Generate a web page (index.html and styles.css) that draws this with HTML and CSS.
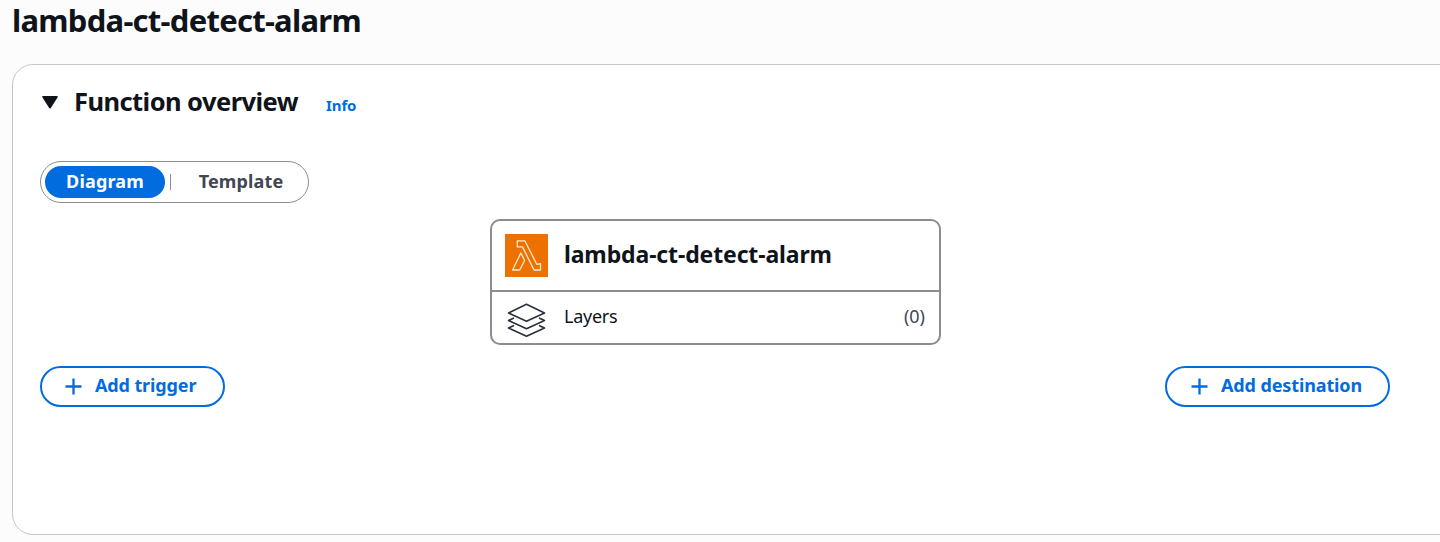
FILE: index.html
```html
<!DOCTYPE html>
<html lang="en">
<head>
<meta charset="utf-8">
<title>lambda-ct-detect-alarm</title>
<link rel="stylesheet" href="styles.css">
</head>
<body>
<h1 class="page-title"><span>lambda-ct-detect-alarm</span></h1>
<section class="panel">
  <header class="panel-header">
    <svg class="caret" width="18" height="14" viewBox="0 0 18 14"><path d="M2 1.7H16L9 12.7Z" fill="#0f141a" stroke="#0f141a" stroke-width="1.6" stroke-linejoin="round"/></svg>
    <h2 class="panel-title">Function overview</h2>
    <a class="info">Info</a>
  </header>
  <div class="segments">
    <button class="segment segment-active"><span class="diagram-label">Diagram</span></button>
    <i class="divider"></i>
    <button class="segment segment-template"><span class="template-label">Template</span></button>
  </div>
  <div class="function-card">
    <div class="card-row card-name">
      <svg class="lambda" width="43" height="43" viewBox="0 0 43 43"><rect width="43" height="43" fill="#ed7100"/><path d="M12.3 6.8H19.8L31.8 30.3L35.5 29.7V36H29L17.5 12.9H12.3ZM15.9 18.9L19.6 26.5L14.7 36H7.6Z" fill="none" stroke="#ffe9cf" stroke-width="1.3" stroke-linejoin="round"/></svg>
      <span class="name">lambda-ct-detect-alarm</span>
    </div>
    <div class="card-row card-layers">
      <svg class="layers" width="43" height="38" viewBox="0 0 43 38"><g fill="none" stroke="#2b2f3c" stroke-width="1.6" stroke-linejoin="round" stroke-linecap="round"><path d="M21.5 3.3L39.5 12L21.5 20.2L3.5 12Z"/><path d="M8.4 17.2L3.5 19.5L21.5 27.8L39.5 19.5L34.6 17.2"/><path d="M8.4 24.7L3.5 27L21.5 35.2L39.5 27L34.6 24.7"/></g></svg>
      <span class="layers-label">Layers</span>
      <span class="count">(0)</span>
    </div>
  </div>
  <div class="actions">
    <button class="action"><svg width="17" height="17" viewBox="0 0 17 17"><path d="M8.5 .5V16.5M.5 8.5H16.5" stroke="#006ce0" stroke-width="2.3"/></svg><span class="trigger-label">Add trigger</span></button>
    <button class="action destination"><svg width="17" height="17" viewBox="0 0 17 17"><path d="M8.5 .5V16.5M.5 8.5H16.5" stroke="#006ce0" stroke-width="2.3"/></svg><span class="destination-label">Add destination</span></button>
  </div>
</section>
</body>
</html>
```

FILE: styles.css
```css
* { box-sizing: border-box; }
html { overflow: hidden; }
body {
  margin: 0;
  height: 542px;
  overflow: hidden;
  background: #fcfcfd;
  color: #0f141a;
  font-family: "Noto Sans", "Open Sans", sans-serif;
  white-space: nowrap;
}
h1, h2 { margin: 0; }
button { font: inherit; margin: 0; padding: 0; }
.page-title {
  height: 64px;
  padding-left: 12px;
  font-size: 31px;
  line-height: 40px;
  font-weight: 700;
  letter-spacing: -0.73px;
}
.panel {
  width: 1460px;
  height: 471px;
  margin-left: 12px;
  padding: 17px 0 0 27px;
  border: 1px solid #c6c6cd;
  border-radius: 21px;
  background: #fff;
}
.panel-header { display: flex; height: 40px; }
.caret { margin: 13px 0 0 1px; }
.panel-title {
  width: 225px;
  margin-left: 15px;
  font-size: 25.5px;
  line-height: 39px;
  font-weight: 700;
  letter-spacing: -0.56px;
}
.info {
  margin: 7px 0 0 27px;
  color: #006ce0;
  font-size: 15px;
  line-height: 32px;
  font-weight: 700;
  letter-spacing: -0.1px;
}
.segments {
  display: flex;
  align-items: center;
  width: 269px;
  height: 42px;
  margin-top: 39px;
  padding-left: 4px;
  border: 1px solid #8c8c94;
  border-radius: 21px;
}
.segment {
  height: 32px;
  width: 137px;
  padding-bottom: 2px;
  border: 0;
  border-radius: 16px;
  background: none;
  color: #424650;
  font-size: 18px;
  line-height: 30px;
  font-weight: 700;
  letter-spacing: 0.15px;
}
.segment-active { width: 120px; background: #006ce0; color: #fff; }
.segment-template { padding-left: 3px; }
.divider { width: 1px; height: 16px; margin-left: 5px; background: #8c8c94; }
.function-card {
  width: 451px;
  height: 126px;
  margin: 16px 0 0 450px;
  border: 2px solid #8c8c8f;
  border-radius: 10px;
}
.card-row { display: flex; }
.card-name { height: 71px; padding: 13px; border-bottom: 2px solid #8c8c8f; }
.name {
  margin-left: 16px;
  font-size: 23px;
  line-height: 40px;
  font-weight: 700;
  letter-spacing: -0.13px;
}
.card-layers { padding: 9px 14px 0 13px; font-size: 18px; line-height: 31px; }
.layers-label { margin-left: 16px; letter-spacing: -0.25px; }
.count { margin-left: auto; color: #424650; }
.actions {
  display: flex;
  justify-content: space-between;
  width: 1350px;
  margin-top: 21px;
}
.action {
  display: flex;
  align-items: center;
  width: 185px;
  height: 41px;
  padding-left: 23px;
  border: 2px solid #006ce0;
  border-radius: 21px;
  background: #fff;
  color: #006ce0;
  font-size: 18px;
  line-height: 34px;
  font-weight: 700;
  letter-spacing: -0.12px;
}
.action span { margin-left: 13px; height: 38px; }
.destination { width: 225px; padding-left: 24px; }
```
